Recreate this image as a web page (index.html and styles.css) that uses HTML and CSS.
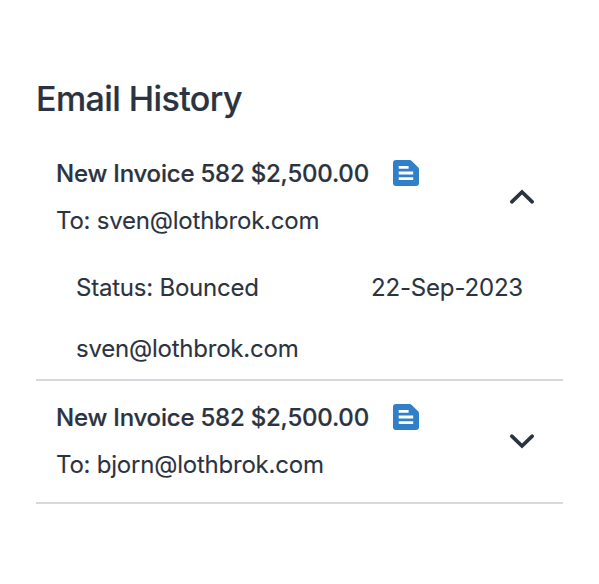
FILE: index.html
```html
<!DOCTYPE html>
<html lang="en">
<head>
<meta charset="utf-8">
<title>Email History</title>
<link rel="stylesheet" href="styles.css">
</head>
<body>
<main class="history">
  <h1 class="title">Email History</h1>
  <section class="entry open">
    <header class="summary">
      <div class="info">
        <div class="subject"><span class="name">New Invoice 582 $2,500.00</span><svg class="doc" viewBox="0 0 26 26"><path d="M3 0H16.6Q17.8 0 18.7 .9L25.1 7.3Q26 8.2 26 9.4V23a3 3 0 0 1-3 3H3a3 3 0 0 1-3-3V3a3 3 0 0 1 3-3Z" fill="#307fc9"/><path d="M5.7 7.3H15.6M5.7 13H20.2M5.7 18.7H20.2" stroke="#fff" stroke-width="2.8"/></svg></div>
        <div class="to">To: sven@lothbrok.com</div>
      </div>
      <svg class="chevron" viewBox="0 0 26 16"><path d="M2.8 12.8L13 3L23.2 12.8"/></svg>
    </header>
    <div class="details">
      <div class="status"><span>Status: Bounced</span><span class="date">22-Sep-2023</span></div>
      <div class="address">sven@lothbrok.com</div>
    </div>
  </section>
  <section class="entry">
    <header class="summary">
      <div class="info">
        <div class="subject"><span class="name">New Invoice 582 $2,500.00</span><svg class="doc" viewBox="0 0 26 26"><path d="M3 0H16.6Q17.8 0 18.7 .9L25.1 7.3Q26 8.2 26 9.4V23a3 3 0 0 1-3 3H3a3 3 0 0 1-3-3V3a3 3 0 0 1 3-3Z" fill="#307fc9"/><path d="M5.7 7.3H15.6M5.7 13H20.2M5.7 18.7H20.2" stroke="#fff" stroke-width="2.8"/></svg></div>
        <div class="to">To: bjorn@lothbrok.com</div>
      </div>
      <svg class="chevron" viewBox="0 0 26 16"><path d="M2.8 3.2L13 13L23.2 3.2"/></svg>
    </header>
  </section>
</main>
</body>
</html>
```
FILE: styles.css
```css
* { box-sizing: border-box; }
body { margin: 0; background: #fff; color: #2b3341; font-family: Inter, sans-serif; font-size: 24px; letter-spacing: -0.22px; -webkit-text-stroke: 0.1px #2b3341; }
.history { padding: 78px 36px 0; }
.title { margin: 0 0 16px; font-size: 34px; line-height: 42px; font-weight: 500; letter-spacing: -0.58px; -webkit-text-stroke-width: 0.2px; }
.entry { border-bottom: 2px solid #d6d8de; height: 123px; }
.entry.open { height: 245px; }
.summary { display: flex; justify-content: space-between; align-items: center; padding: 21px 28px 0 20px; }
.open .summary { padding-top: 22px; }
.subject { display: flex; align-items: center; gap: 24px; height: 30px; font-weight: 500; letter-spacing: -0.21px; -webkit-text-stroke-width: 0.2px; }
.to { margin-top: 18px; line-height: 30px; }
.name, .to, .status, .address { white-space: nowrap; }
.doc { width: 26px; height: 26px; }
.chevron { width: 26px; height: 16px; fill: none; stroke: #2b3341; stroke-width: 3.7; stroke-linecap: round; }
.details { padding: 37px 40px 0; line-height: 30px; }
.status { display: flex; justify-content: space-between; }
.date { letter-spacing: -0.17px; }
.address { margin-top: 31px; }
```
